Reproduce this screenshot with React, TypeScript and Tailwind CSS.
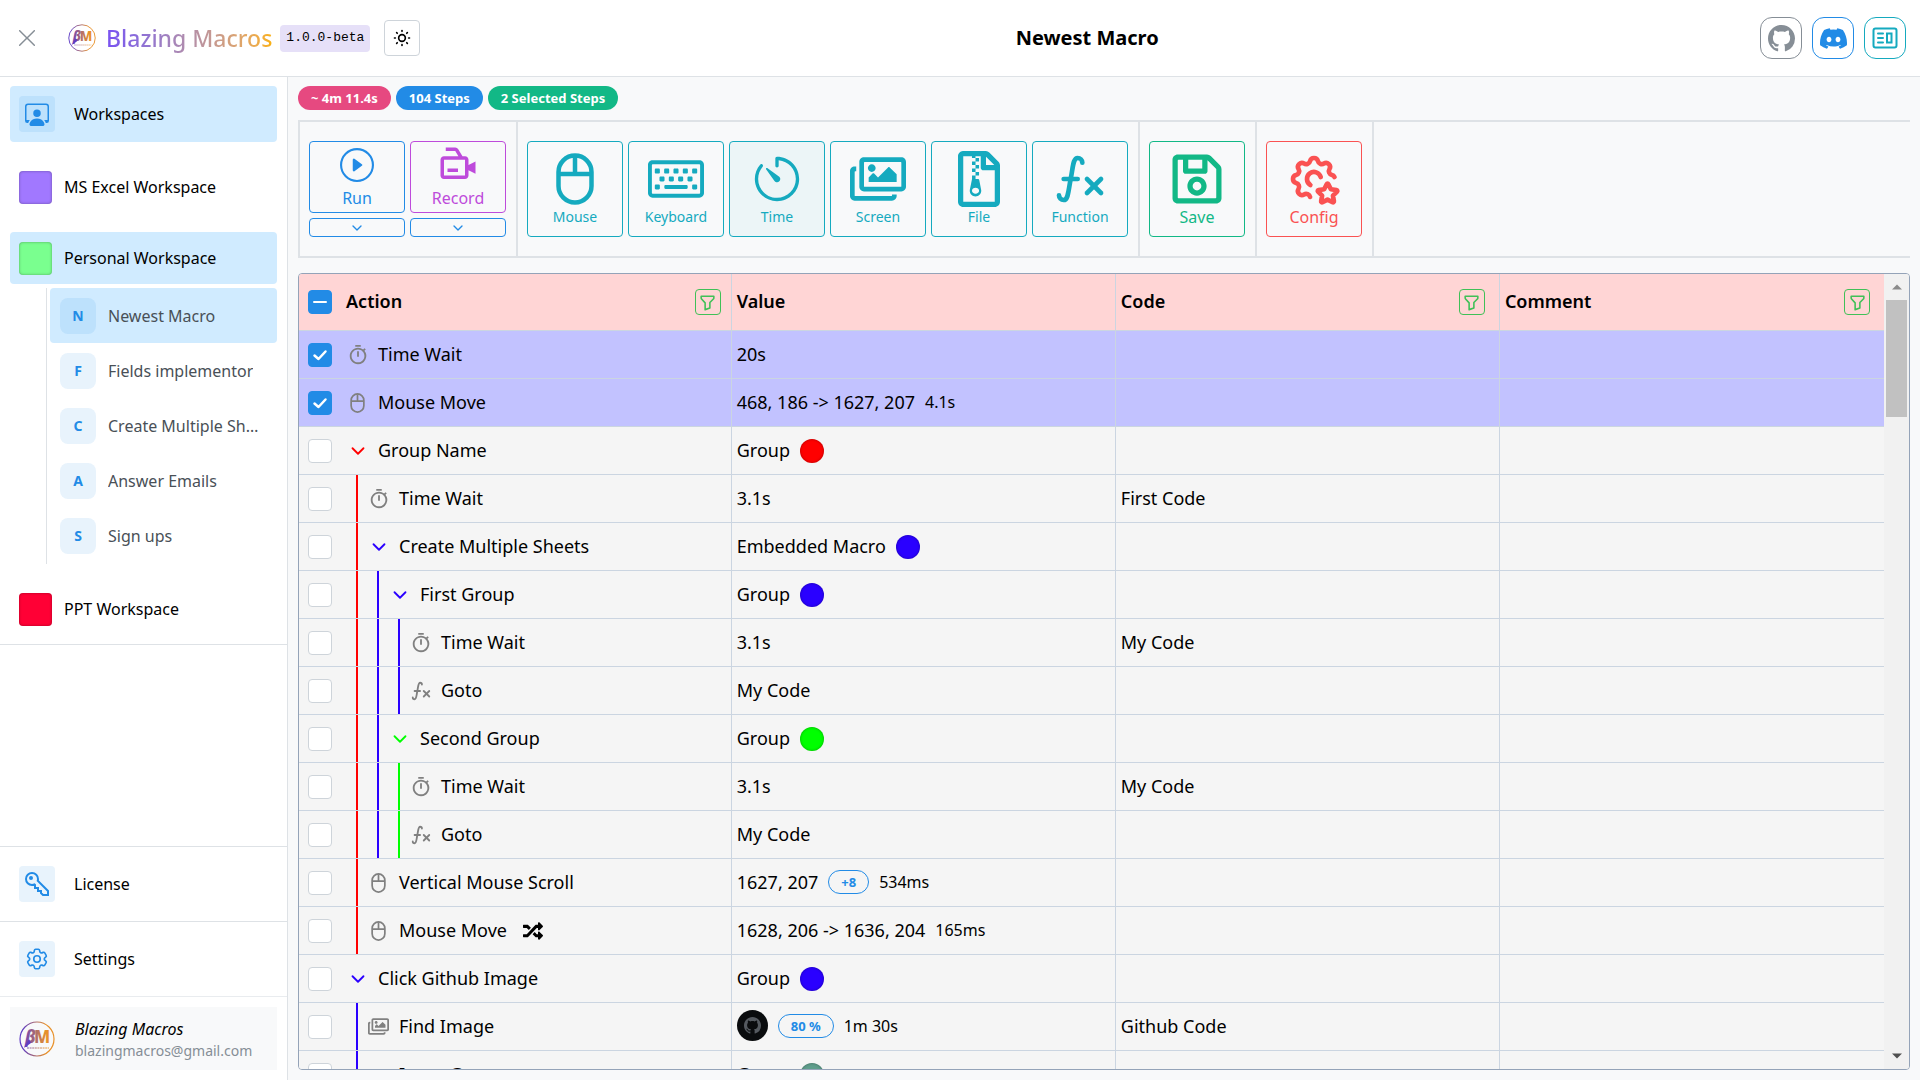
import { useEffect, useRef, type ReactNode } from "react";
import { BiVideoRecording } from "react-icons/bi";
import { BsDiscord, BsGithub, BsPersonWorkspace, BsPlayCircle } from "react-icons/bs";
import { FaRandom, FaRegFileArchive, FaRegImages, FaRegKeyboard, FaRegSave } from "react-icons/fa";
import { GrKey } from "react-icons/gr";
import { HiOutlineCog6Tooth } from "react-icons/hi2";
import { MdOutlineTimer } from "react-icons/md";
import { RxCross1, RxTimer } from "react-icons/rx";
import { TbChevronDown, TbFilter, TbMathFunction, TbSettingsStar, TbSun } from "react-icons/tb";

const RED = "#ff0000";
const BLUE = "#2a00ff";
const GREEN = "#00ff00";
const TEAL = "#5f9e8c";

type Icon = "timer" | "mouse" | "function" | "image" | "group";

type Step = {
  name: string;
  icon: Icon;
  guides: string[];
  color?: string;
  value: ReactNode;
  code?: string;
  selected?: boolean;
  random?: boolean;
};

const STEPS: Step[] = [
  { name: "Time Wait", icon: "timer", guides: [], value: "20s", selected: true },
  { name: "Mouse Move", icon: "mouse", guides: [], value: <>468, 186 -&gt; 1627, 207<Duration>4.1s</Duration></>, selected: true },
  { name: "Group Name", icon: "group", color: RED, guides: [], value: "Group" },
  { name: "Time Wait", icon: "timer", guides: [RED], value: "3.1s", code: "First Code" },
  { name: "Create Multiple Sheets", icon: "group", color: BLUE, guides: [RED], value: "Embedded Macro" },
  { name: "First Group", icon: "group", color: BLUE, guides: [RED, BLUE], value: "Group" },
  { name: "Time Wait", icon: "timer", guides: [RED, BLUE, BLUE], value: "3.1s", code: "My Code" },
  { name: "Goto", icon: "function", guides: [RED, BLUE, BLUE], value: "My Code" },
  { name: "Second Group", icon: "group", color: GREEN, guides: [RED, BLUE], value: "Group" },
  { name: "Time Wait", icon: "timer", guides: [RED, BLUE, GREEN], value: "3.1s", code: "My Code" },
  { name: "Goto", icon: "function", guides: [RED, BLUE, GREEN], value: "My Code" },
  { name: "Vertical Mouse Scroll", icon: "mouse", guides: [RED], value: <>1627, 207<Pill>+8</Pill><Duration>534ms</Duration></> },
  { name: "Mouse Move", icon: "mouse", guides: [RED], value: <>1628, 206 -&gt; 1636, 204<Duration>165ms</Duration></>, random: true },
  { name: "Click Github Image", icon: "group", color: BLUE, guides: [], value: "Group" },
  { name: "Find Image", icon: "image", guides: [BLUE], value: <><GithubThumb /><Pill>80 %</Pill><Duration>1m 30s</Duration></>, code: "Github Code" },
  { name: "Inner Group", icon: "group", color: TEAL, guides: [BLUE], value: "Group" },
];

const MACROS = ["Newest Macro", "Fields implementor", "Create Multiple Sheets", "Answer Emails", "Sign ups"];

function Duration({ children }: { children: ReactNode }) {
  return <span className="text-base">{children}</span>;
}

function Pill({ children }: { children: ReactNode }) {
  return (
    <span className="flex h-6 items-center rounded-full border border-[#228be6] px-3 text-[13px] font-bold text-[#228be6]">
      {children}
    </span>
  );
}

function GithubThumb() {
  return (
    <span className="flex size-[31px] items-center justify-center rounded-full bg-[#0a0c0e]">
      <BsGithub size={17} color="#555a60" />
    </span>
  );
}

function Logo({ className }: { className: string }) {
  return (
    <svg className={className} viewBox="0 0 36 36" fill="none">
      <defs>
        <linearGradient id="brand" x1="0" y1="0" x2="36" y2="0" gradientUnits="userSpaceOnUse">
          <stop offset="0.1" stopColor="#5f3dc4" />
          <stop offset="0.75" stopColor="#e8912a" />
        </linearGradient>
      </defs>
      <circle cx="18" cy="18" r="17" stroke="url(#brand)" strokeWidth="1.2" />
      <text x="6" y="22" fontSize="17" fontWeight="800" fontStyle="italic" fontFamily="Noto Sans, sans-serif" fill="url(#brand)">β</text>
      <text x="15" y="22" fontSize="17" fontWeight="800" fontFamily="Noto Sans, sans-serif" fill="url(#brand)">M</text>
      <path d="M10 18l-5 9 7-5z" fill="#5f3dc4" />
      <path d="M8 27h22" stroke="url(#brand)" strokeWidth="1.4" strokeDasharray="2 0.6" opacity="0.6" />
    </svg>
  );
}

function MouseIcon({ className }: { className: string }) {
  return (
    <svg className={className} viewBox="0 0 38 52" fill="none" stroke="currentColor" strokeWidth="4.5">
      <rect x="2.5" y="2.5" width="33" height="47" rx="16.5" />
      <path d="M2.5 21h33M19 3v18" />
    </svg>
  );
}

function NewsIcon() {
  return (
    <svg width="26" height="22" viewBox="0 0 26 22" fill="none" stroke="currentColor" strokeWidth="2" strokeLinecap="round">
      <rect x="1.5" y="1.5" width="23" height="19" rx="2" />
      <path d="M6 6.5h5M6 11h5M6 15.5h5" />
      <rect x="15" y="6.5" width="4.5" height="9" />
    </svg>
  );
}

function StepIcon({ icon, color }: { icon: Icon; color?: string }) {
  if (icon === "timer") return <MdOutlineTimer size={22} className="shrink-0" />;
  if (icon === "mouse") return <MouseIcon className="h-5 w-[15px]" />;
  if (icon === "function") return <TbMathFunction size={22} className="shrink-0" />;
  if (icon === "image") return <FaRegImages size={21} className="shrink-0" />;
  return <TbChevronDown size={22} color={color} className="shrink-0" />;
}

function Checkbox({ label, checked, indeterminate }: { label: string; checked?: boolean; indeterminate?: boolean }) {
  const ref = useRef<HTMLInputElement>(null);

  useEffect(() => {
    if (ref.current) ref.current.indeterminate = !!indeterminate;
  }, [indeterminate]);

  return (
    <label className="grid size-6 shrink-0 place-items-center">
      <input
        ref={ref}
        type="checkbox"
        aria-label={label}
        defaultChecked={checked}
        className="peer col-start-1 row-start-1 size-6 appearance-none rounded border border-[#ced4da] bg-white checked:border-[#228be6] checked:bg-[#228be6] indeterminate:border-[#228be6] indeterminate:bg-[#228be6]"
      />
      <svg className="pointer-events-none col-start-1 row-start-1 hidden size-4 peer-checked:block" viewBox="0 0 16 16" fill="none">
        <path d="M2.5 8.5l4 3.5 7-7.5" stroke="#fff" strokeWidth="2.5" strokeLinecap="round" strokeLinejoin="round" />
      </svg>
      <span className="pointer-events-none col-start-1 row-start-1 hidden h-0.5 w-3.5 rounded bg-white peer-indeterminate:block" />
    </label>
  );
}

function FilterButton({ label }: { label: string }) {
  return (
    <button aria-label={label} className="flex size-[26px] items-center justify-center rounded border border-[#40c057] text-[#40c057]">
      <TbFilter size={19} />
    </button>
  );
}

function Header() {
  return (
    <header className="flex h-[77px] shrink-0 items-center border-b border-[#dee2e6] bg-white pr-3.5 pl-4">
      <button aria-label="Close menu" className="text-[#868e96]">
        <RxCross1 size={22} />
      </button>
      <Logo className="ml-[30px] size-7" />
      <span className="ml-2.5 bg-linear-to-r from-[#7950f2] to-[#fab005] bg-clip-text text-[23px] font-medium text-transparent">
        Blazing Macros
      </span>
      <code className="ml-2 flex h-[27px] items-center rounded bg-[#e6e0f8] px-1.5 font-['Liberation_Mono',monospace] text-[13px]">
        1.0.0-beta
      </code>
      <button aria-label="Toggle theme" className="ml-3.5 flex size-9 items-center justify-center rounded border border-[#ced4da]">
        <TbSun size={20} />
      </button>
      <h1 className="flex-1 pr-1.5 text-center text-xl font-bold">Newest Macro</h1>
      <nav className="flex gap-2.5">
        <a href="#github" aria-label="Github" className="flex size-[42px] items-center justify-center rounded-xl border border-[#868e96] text-[#868e96]">
          <BsGithub size={27} />
        </a>
        <a href="#discord" aria-label="Discord" className="flex size-[42px] items-center justify-center rounded-xl border border-[#228be6] text-[#228be6]">
          <BsDiscord size={27} />
        </a>
        <a href="#news" aria-label="News" className="flex size-[42px] items-center justify-center rounded-xl border border-[#15aabf] text-[#15aabf]">
          <NewsIcon />
        </a>
      </nav>
    </header>
  );
}

function Swatch({ className }: { className: string }) {
  return <span className={`size-[33px] rounded shadow-[inset_0_0_3px_rgba(0,0,0,0.35)] ${className}`} />;
}

function Workspace({ name, swatch, active }: { name: string; swatch: string; active?: boolean }) {
  return (
    <a href="#workspace" className={`flex h-[52px] items-center gap-3 rounded px-[9px] ${active ? "bg-[#d0ebff]" : ""}`}>
      <Swatch className={swatch} />
      {name}
    </a>
  );
}

function SideLink({ icon, children, active }: { icon: ReactNode; children: ReactNode; active?: boolean }) {
  return (
    <a href="#section" className={`flex h-14 items-center gap-[19px] rounded px-[9px] ${active ? "bg-[#d0ebff]" : ""}`}>
      <span className="flex size-9 items-center justify-center rounded bg-[#228be6]/10 text-[#228be6]">{icon}</span>
      {children}
    </a>
  );
}

function Sidebar() {
  return (
    <aside className="flex w-72 shrink-0 flex-col border-r border-[#dee2e6] bg-white">
      <div className="flex flex-col gap-[19px] border-b border-[#dee2e6] px-2.5 py-[9px]">
        <SideLink icon={<BsPersonWorkspace size={24} />} active>Workspaces</SideLink>
        <Workspace name="MS Excel Workspace" swatch="bg-[#a178ff]" />
        <div>
          <Workspace name="Personal Workspace" swatch="bg-[#7aff8f]" active />
          <div className="mt-1 ml-9 border-l border-[#dee2e6] pb-px pl-[3px]">
            {MACROS.map((name, i) => (
              <a
                key={name}
                href="#macro"
                className={`flex h-[55px] items-center gap-3 rounded px-2.5 text-[#495057] ${i === 0 ? "bg-[#d0ebff]" : ""}`}
              >
                <span className="flex size-9 shrink-0 items-center justify-center rounded-lg bg-[#228be6]/10 text-sm font-bold text-[#228be6]">
                  {name[0]}
                </span>
                <span className="truncate">{name}</span>
              </a>
            ))}
          </div>
        </div>
        <Workspace name="PPT Workspace" swatch="bg-[#ff0035]" />
      </div>

      <div className="mt-auto border-t border-[#dee2e6] px-2.5 py-[9px]">
        <SideLink icon={<GrKey size={24} className="[&_path]:stroke-[#228be6]" />}>License</SideLink>
      </div>
      <div className="border-t border-[#dee2e6] px-2.5 py-[9px]">
        <SideLink icon={<HiOutlineCog6Tooth size={26} />}>Settings</SideLink>
      </div>
      <div className="border-t border-[#e9ecef] p-2.5">
        <div className="flex h-[63px] items-center gap-5 bg-[#f8f9fa] px-[9px]">
          <Logo className="size-9" />
          <div>
            <p className="text-base leading-6 italic">Blazing Macros</p>
            <p className="text-sm leading-5 text-[#868e96]">blazingmacros@gmail.com</p>
          </div>
        </div>
      </div>
    </aside>
  );
}

function ToolButton({ icon, label, className }: { icon: ReactNode; label: string; className: string }) {
  return (
    <button className={`flex size-24 flex-col items-center justify-end rounded border pb-[9px] ${className}`}>
      <span className="flex h-14 items-center">{icon}</span>
      <span className="leading-5">{label}</span>
    </button>
  );
}

function SplitButton({ icon, label, className }: { icon: ReactNode; label: string; className: string }) {
  return (
    <div className="flex flex-col gap-[5px]">
      <button className={`flex h-[72px] w-24 flex-col items-center justify-end rounded border pb-0.5 ${className}`}>
        <span className="flex h-[42px] items-center">{icon}</span>
        <span className="leading-6">{label}</span>
      </button>
      <button
        aria-label={`${label} options`}
        className="flex h-[19px] items-center justify-center rounded border border-[#228be6] text-[#228be6]"
      >
        <TbChevronDown size={16} />
      </button>
    </div>
  );
}

function Toolbar() {
  const cyan = "border-[#15aabf] text-[#15aabf] text-sm";
  const section = "flex gap-[5px] border-r-2 border-[#dee2e6] py-[19px] pr-2.5 pl-[9px]";

  return (
    <div className="mt-2.5 flex border-y-2 border-l-2 border-[#dee2e6]">
      <div className={section}>
        <SplitButton icon={<BsPlayCircle size={34} />} label="Run" className="border-[#228be6] text-[#228be6]" />
        <SplitButton icon={<BiVideoRecording size={42} />} label="Record" className="border-[#be4bdb] text-[#be4bdb]" />
      </div>
      <div className={section}>
        <ToolButton icon={<MouseIcon className="h-[52px] w-[38px]" />} label="Mouse" className={cyan} />
        <ToolButton icon={<FaRegKeyboard size={56} />} label="Keyboard" className={cyan} />
        <ToolButton icon={<RxTimer size={50} />} label="Time" className={`${cyan} bg-[#15aabf]/5`} />
        <ToolButton icon={<FaRegImages size={56} />} label="Screen" className={cyan} />
        <ToolButton icon={<FaRegFileArchive size={56} />} label="File" className={cyan} />
        <ToolButton icon={<TbMathFunction size={56} />} label="Function" className={cyan} />
      </div>
      <div className={section}>
        <ToolButton icon={<FaRegSave size={56} />} label="Save" className="border-[#12b886] text-[#12b886]" />
      </div>
      <div className={section}>
        <ToolButton icon={<TbSettingsStar size={56} />} label="Config" className="border-[#fa5252] text-[#fa5252]" />
      </div>
    </div>
  );
}

function StepRow({ step }: { step: Step }) {
  return (
    <tr className={`h-12 ${step.selected ? "bg-[#c2c2ff]" : "bg-[#f5f5f5]"}`}>
      <td className="border-r p-0">
        <div className="flex h-[47px] items-center pl-[9px]">
          <Checkbox label={`Select ${step.name}`} checked={step.selected} />
          <div className="ml-[15px] flex h-full items-center">
            {step.guides.map((color, i) => (
              <span key={i} className="flex h-full w-[21px] pl-[9px]">
                <span className="h-full w-0.5" style={{ backgroundColor: color }} />
              </span>
            ))}
            <span className="flex w-[21px] justify-center text-[#808080]">
              <StepIcon icon={step.icon} color={step.color} />
            </span>
            <span className="ml-2.5 pb-0.5">{step.name}</span>
            {step.random && <FaRandom size={20} className="ml-4" />}
          </div>
        </div>
      </td>
      <td className="border-r p-0">
        <div className="flex items-center gap-2.5 pl-[5px]">
          <span className="flex items-center gap-2.5 pb-0.5">{step.value}</span>
          {step.color && (
            <span
              className="size-6 rounded-full shadow-[inset_0_0_3px_rgba(0,0,0,0.35)]"
              style={{ backgroundColor: step.color }}
            />
          )}
        </div>
      </td>
      <td className="border-r pt-0 pr-0 pb-0.5 pl-[5px]">{step.code}</td>
      <td className="p-0" />
    </tr>
  );
}

function StepsTable() {
  return (
    <div className="mt-[15px] flex min-h-0 flex-1 overflow-hidden rounded border border-[#94a3b8]">
      <div className="min-w-0 flex-1 overflow-hidden">
        <table className="w-full table-fixed border-separate border-spacing-0 text-lg leading-6 [&_td]:border-b">
          <thead>
            <tr className="h-[57px] bg-[#ffd5d5] text-left [&_th]:border-b [&_th]:border-[#cbd5e1] [&_th]:font-semibold">
              <th className="w-[27.3%] border-r p-0">
                <div className="flex items-center pr-2.5 pl-[9px]">
                  <Checkbox label="Select all steps" indeterminate />
                  <span className="ml-3.5 flex-1 pb-0.5">Action</span>
                  <FilterButton label="Filter actions" />
                </div>
              </th>
              <th className="border-r pt-0 pr-0 pb-0.5 pl-[5px]">Value</th>
              <th className="border-r p-0">
                <div className="flex items-center justify-between pr-3.5 pl-[5px]">
                  <span className="pb-0.5">Code</span>
                  <FilterButton label="Filter codes" />
                </div>
              </th>
              <th className="p-0">
                <div className="flex items-center justify-between pr-3.5 pl-[5px]">
                  <span className="pb-0.5">Comment</span>
                  <FilterButton label="Filter comments" />
                </div>
              </th>
            </tr>
          </thead>
          <tbody className="[&_td]:border-[#cbd5e1]">
            {STEPS.map((step, i) => (
              <StepRow key={i} step={step} />
            ))}
          </tbody>
        </table>
      </div>

      {/* Scrollbar */}
      <div className="flex w-[25px] shrink-0 flex-col items-center bg-[#f1f1f1]">
        <svg className="my-2 size-2.5" viewBox="0 0 10 10">
          <path d="M5 2.5l5 5H0z" fill="#8a8a8a" />
        </svg>
        <span className="h-[117px] w-[21px] bg-[#c1c1c1]" />
        <svg className="mt-auto mb-2 size-2.5" viewBox="0 0 10 10">
          <path d="M5 7.5l5-5H0z" fill="#505050" />
        </svg>
      </div>
    </div>
  );
}

export default function App() {
  return (
    <div className="flex h-screen flex-col bg-[#f8f9fa] font-['Noto_Sans',sans-serif] text-base text-black">
      <Header />
      <div className="flex min-h-0 flex-1">
        <Sidebar />
        <main className="flex min-w-0 flex-1 flex-col px-2.5 pt-[9px] pb-2.5">
          <div className="flex gap-[5px] text-[13px] leading-6 font-bold text-white">
            <span className="rounded-full bg-[#e64980] px-[13px]">~ 4m 11.4s</span>
            <span className="rounded-full bg-[#228be6] px-[13px]">104 Steps</span>
            <span className="rounded-full bg-[#12b886] px-[13px]">2 Selected Steps</span>
          </div>
          <Toolbar />
          <StepsTable />
        </main>
      </div>
    </div>
  );
}
